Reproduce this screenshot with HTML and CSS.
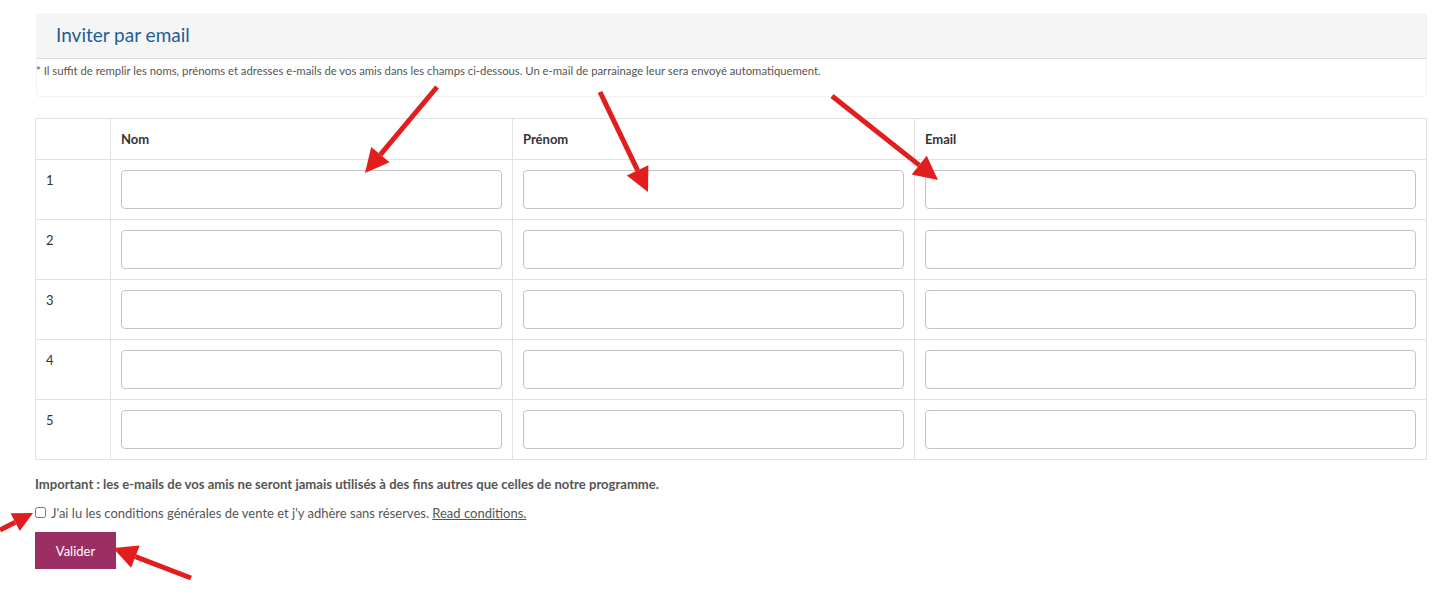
FILE: index.html
```html
<!DOCTYPE html>
<html lang="fr">
<head>
<meta charset="utf-8">
<title>Inviter par email</title>
<link rel="stylesheet" href="styles.css">
</head>
<body>
<div class="page">
  <div class="panel">
    <div class="panel-heading"><h3 class="panel-title">Inviter par email</h3></div>
    <div class="panel-body">* Il suffit de remplir les noms, prénoms et adresses e-mails de vos amis dans les champs ci-dessous. Un e-mail de parrainage leur sera envoyé automatiquement.</div>
  </div>

  <table class="invite-table">
    <colgroup>
      <col class="c-num"><col class="c-nom"><col class="c-prenom"><col class="c-email">
    </colgroup>
    <thead>
      <tr><th></th><th>Nom</th><th>Prénom</th><th>Email</th></tr>
    </thead>
    <tbody>
      <tr><td>1</td><td><input type="text" class="field"></td><td><input type="text" class="field"></td><td><input type="email" class="field"></td></tr>
      <tr><td>2</td><td><input type="text" class="field"></td><td><input type="text" class="field"></td><td><input type="email" class="field"></td></tr>
      <tr><td>3</td><td><input type="text" class="field"></td><td><input type="text" class="field"></td><td><input type="email" class="field"></td></tr>
      <tr><td>4</td><td><input type="text" class="field"></td><td><input type="text" class="field"></td><td><input type="email" class="field"></td></tr>
      <tr><td>5</td><td><input type="text" class="field"></td><td><input type="text" class="field"></td><td><input type="email" class="field"></td></tr>
    </tbody>
  </table>

  <p class="important">Important : les e-mails de vos amis ne seront jamais utilisés à des fins autres que celles de notre programme.</p>
  <label class="terms"><input type="checkbox" class="check"> J'ai lu les conditions générales de vente et j'y adhère sans réserves. <a href="#" class="terms-link">Read conditions.</a></label>
  <button type="button" class="btn-submit">Valider</button>
</div>

<svg class="arrows" width="1438" height="613" viewBox="0 0 1438 613" aria-hidden="true">
  <g stroke="#e21d1d" stroke-width="5" stroke-linecap="butt" fill="none">
    <line x1="437" y1="87" x2="380.4" y2="154.6"/>
    <line x1="600" y1="92" x2="637.6" y2="170.4"/>
    <line x1="832" y1="96" x2="919.2" y2="165.1"/>
    <line x1="0" y1="530" x2="15.2" y2="522.2"/>
    <line x1="191" y1="578" x2="135.4" y2="556.6"/>
  </g>
  <g fill="#e21d1d">
    <polygon points="365,173 389.6,162.3 371.2,146.9"/>
    <polygon points="648,192 648.4,165.2 626.8,175.6"/>
    <polygon points="938,180 911.7,174.5 926.7,155.7"/>
    <polygon points="33,513 19.8,531.1 10.6,513.3"/>
    <polygon points="113,548 139.7,545.4 131.1,567.8"/>
  </g>
</svg>
</body>
</html>
```

FILE: styles.css
```css
html, body {
  margin: 0;
  padding: 0;
  background: #fff;
}
body {
  font-family: Lato, "Open Sans", "Liberation Sans", sans-serif;
  font-size: 13px;
  color: #333;
  position: relative;
  width: 1438px;
  height: 613px;
  overflow: hidden;
}
.page {
  padding: 13px 11px 0 35px;
}
.panel {
  margin-left: 1px;
  border: 1px solid #f2f2f2;
  border-top: 0;
  border-radius: 4px;
  background: #fff;
}
.panel-heading {
  background: #f5f5f5;
  border-bottom: 1px solid #dcdcdc;
  border-radius: 4px 4px 0 0;
  height: 45px;
  display: flex;
  align-items: center;
  padding: 0 19px;
}
.panel-title {
  margin: 0;
  font-size: 19px;
  font-weight: 400;
  color: #1e5d98;
  line-height: 1;
  position: relative;
  top: -1px;
}
.panel-body {
  font-size: 11.3px;
  color: #555;
  line-height: 14px;
  padding: 5px 0 18px 0;
  margin-left: -1px;
}
.invite-table {
  margin-top: 21px;
  width: 100%;
  border-collapse: collapse;
  table-layout: fixed;
}
.c-num { width: 75px; }
.c-nom { width: 402px; }
.c-prenom { width: 402px; }
.invite-table th,
.invite-table td {
  border: 1px solid #e2e2e2;
  padding: 10px;
  text-align: left;
  vertical-align: top;
  line-height: 20px;
}
.invite-table th {
  font-weight: 700;
  color: #333;
  font-size: 13px;
}
.invite-table td {
  height: 39px;
}
.field {
  display: block;
  box-sizing: border-box;
  width: 100%;
  height: 39px;
  border: 1px solid #c4c4c4;
  border-radius: 4px;
  background: #fff;
  margin: 0;
  padding: 6px 10px;
  font: inherit;
}
.important {
  margin: 16px 0 0 0;
  font-weight: 700;
  color: #555;
  font-size: 13.1px;
  line-height: 17px;
}
.terms {
  display: flex;
  align-items: center;
  margin-top: 12px;
  color: #555;
  font-size: 13px;
  line-height: 17px;
  white-space: pre;
}
.check {
  margin: 0 2px 0 0;
  width: 11px;
  height: 11px;
  position: relative;
  top: -1px;
}
.terms-link {
  color: #555;
  text-decoration: underline;
}
.btn-submit {
  display: block;
  margin-top: 10px;
  width: 81px;
  height: 37px;
  border: 0;
  border-radius: 0;
  background: #9b2f64;
  color: #fff;
  font-family: inherit;
  font-size: 13px;
  padding: 0;
}
.arrows {
  position: absolute;
  left: 0;
  top: 0;
  pointer-events: none;
}
```
